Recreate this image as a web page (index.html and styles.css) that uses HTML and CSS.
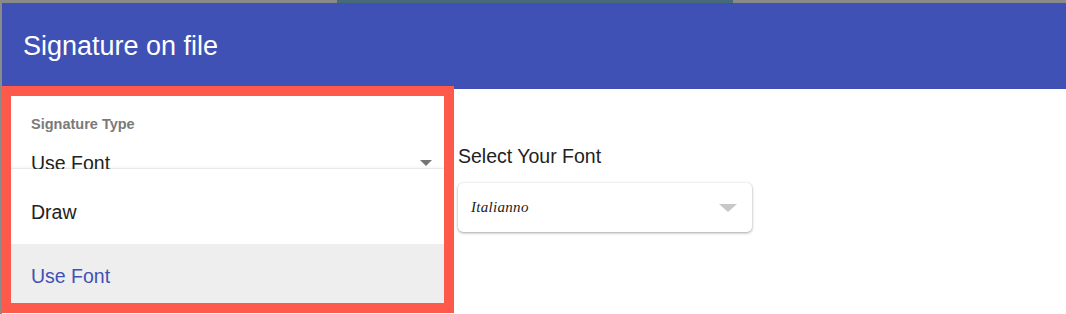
FILE: index.html
```html
<!DOCTYPE html>
<html lang="en">
<head>
<meta charset="utf-8">
<title>Signature on file</title>
<link rel="stylesheet" href="styles.css">
</head>
<body>
  <div class="backdrop-strip">
    <div class="strip-gray strip-left"></div>
    <div class="strip-teal"></div>
    <div class="strip-gray strip-fill"></div>
  </div>
  <div class="dialog">
    <header class="dialog-header">
      <h1 class="dialog-title">Signature on file</h1>
    </header>
    <div class="dialog-body">
      <div class="type-field">
        <div class="field-label">Signature Type</div>
        <div class="field-select">
          <span class="field-value">Use Font</span>
          <span class="field-arrow"></span>
        </div>
        <ul class="menu">
          <li class="menu-item">Draw</li>
          <li class="menu-item menu-item-selected">Use Font</li>
        </ul>
      </div>
      <div class="font-field">
        <div class="font-label">Select Your Font</div>
        <div class="font-select">
          <span class="font-value">Italianno</span>
          <span class="font-arrow"></span>
        </div>
      </div>
    </div>
  </div>
</body>
</html>
```

FILE: styles.css
```css
* {
  box-sizing: border-box;
}

html, body {
  margin: 0;
  padding: 0;
}

body {
  width: 1066px;
  height: 314px;
  overflow: hidden;
  background: #8a8a8a;
  font-family: "Liberation Sans", Arial, sans-serif;
}

.backdrop-strip {
  display: flex;
  height: 3px;
}

.strip-left {
  width: 337px;
}

.strip-teal {
  width: 396px;
  background: #476a7b;
}

.strip-fill {
  flex: 1;
}

.dialog {
  margin-left: 2px;
  height: 311px;
  background: #ffffff;
  display: flex;
  flex-direction: column;
}

.dialog-header {
  height: 86px;
  background: #3f51b5;
  display: flex;
  align-items: center;
  padding-left: 21px;
}

.dialog-title {
  margin: 0;
  color: #ffffff;
  font-size: 27px;
  font-weight: 400;
  letter-spacing: 0;
}

.dialog-body {
  flex: 1;
  display: flex;
  align-items: flex-start;
}

.type-field {
  position: relative;
  z-index: 2;
  margin-top: -3px;
  width: 452px;
  height: 227px;
  border: 10px solid #fe5a4c;
  border-left-width: 9px;
  background: #ffffff;
  overflow: hidden;
  padding: 20px 0 0 20px;
}

.field-label {
  color: #7a7a7a;
  font-size: 14.5px;
  font-weight: 700;
  line-height: 17px;
}

.field-select {
  display: flex;
  align-items: center;
  justify-content: space-between;
  margin-top: 18px;
  padding-right: 12px;
}

.field-value {
  color: #222222;
  font-size: 19.5px;
  line-height: 24px;
}

.field-arrow {
  width: 0;
  height: 0;
  border-left: 6px solid transparent;
  border-right: 6px solid transparent;
  border-top: 6px solid #757575;
}

.menu {
  position: absolute;
  top: 73px;
  left: 0;
  right: 0;
  bottom: -20px;
  margin: 0;
  padding: 11px 0 0 0;
  list-style: none;
  background: #ffffff;
  box-shadow: 0 -1px 3px rgba(0, 0, 0, 0.08), 0 -1px 0 rgba(0, 0, 0, 0.04);
}

.menu-item {
  height: 64px;
  display: flex;
  align-items: center;
  padding-left: 20px;
  color: #222222;
  font-size: 19.5px;
}

.menu-item-selected {
  background: #eeeeee;
  color: #3f51b5;
}

.font-field {
  margin-left: 4px;
  padding-top: 56px;
}

.font-label {
  color: #222222;
  font-size: 19.5px;
  line-height: 22px;
}

.font-select {
  margin-top: 16px;
  width: 294px;
  height: 49px;
  border-radius: 5px;
  background: #ffffff;
  box-shadow: 0 1px 3px rgba(0, 0, 0, 0.35), 0 0 1px rgba(0, 0, 0, 0.12);
  display: flex;
  align-items: center;
  justify-content: space-between;
  padding: 0 15px 0 13px;
}

.font-value {
  font-family: "Liberation Serif", "Times New Roman", serif;
  font-style: italic;
  font-size: 15px;
  color: #222222;
  letter-spacing: 0.3px;
}

.font-arrow {
  width: 0;
  height: 0;
  border-left: 9.5px solid transparent;
  border-right: 9.5px solid transparent;
  border-top: 8px solid #c8c8c8;
}
```
